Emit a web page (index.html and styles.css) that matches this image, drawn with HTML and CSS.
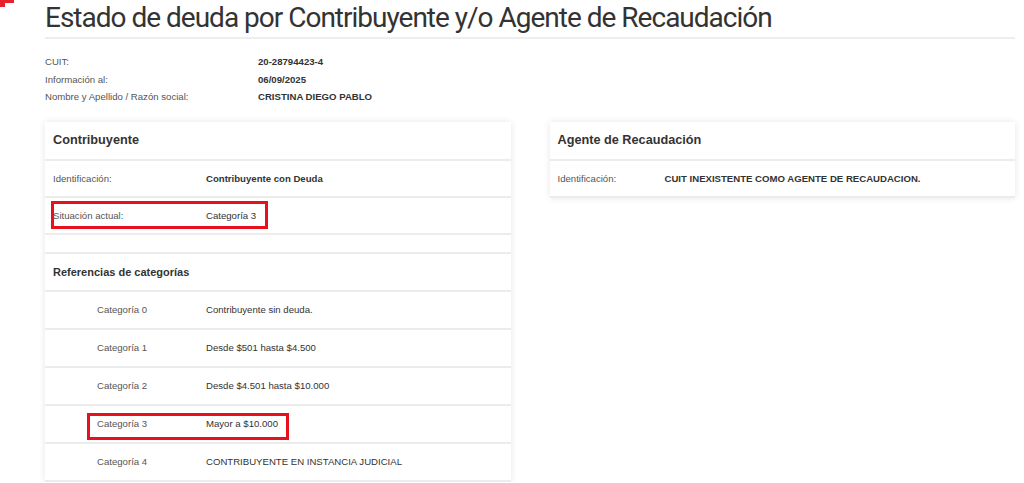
FILE: index.html
```html
<!DOCTYPE html>
<html lang="es">
<head>
    <meta charset="UTF-8">
    <title>Estado de deuda</title>
    <link rel="stylesheet" href="styles.css">
</head>
<body>
    <svg class="corner" width="16" height="8" viewBox="0 0 16 8">
        <polygon points="0,0 14,0 14,3 5,3 5,7 0,7" fill="#e8202a"/>
    </svg>

    <div class="page">
        <h1 class="title">Estado de deuda por Contribuyente y/o Agente de Recaudación</h1>

        <div class="info">
            <span class="info-label">CUIT:</span><span class="info-value">20-28794423-4</span>
            <span class="info-label">Información al:</span><span class="info-value">06/09/2025</span>
            <span class="info-label">Nombre y Apellido / Razón social:</span><span class="info-value">CRISTINA DIEGO PABLO</span>
        </div>

        <div class="cards">
            <div class="card">
                <div class="card-head">Contribuyente</div>
                <div class="row">
                    <span class="label">Identificación:</span>
                    <span class="value strong">Contribuyente con Deuda</span>
                </div>
                <div class="row marked">
                    <span class="label">Situación actual:</span>
                    <span class="value">Categoría 3</span>
                    <span class="mark mark-situacion"></span>
                </div>
                <div class="row empty"></div>
                <div class="row sub-head">Referencias de categorías</div>
                <div class="row cat">
                    <span class="label">Categoría 0</span>
                    <span class="value">Contribuyente sin deuda.</span>
                </div>
                <div class="row cat">
                    <span class="label">Categoría 1</span>
                    <span class="value">Desde $501 hasta $4.500</span>
                </div>
                <div class="row cat">
                    <span class="label">Categoría 2</span>
                    <span class="value">Desde $4.501 hasta $10.000</span>
                </div>
                <div class="row cat marked">
                    <span class="label">Categoría 3</span>
                    <span class="value">Mayor a $10.000</span>
                    <span class="mark mark-cat"></span>
                </div>
                <div class="row cat">
                    <span class="label">Categoría 4</span>
                    <span class="value">CONTRIBUYENTE EN INSTANCIA JUDICIAL</span>
                </div>
            </div>

            <div class="card card-right">
                <div class="card-head">Agente de Recaudación</div>
                <div class="row agent">
                    <span class="label">Identificación:</span>
                    <span class="value strong">CUIT INEXISTENTE COMO AGENTE DE RECAUDACION.</span>
                </div>
            </div>
        </div>
    </div>
</body>
</html>
```

FILE: styles.css
```css
body {
    margin: 0;
    background: #fff;
    font-family: "Liberation Sans", Arial, sans-serif;
    color: #444;
}

.corner {
    position: absolute;
    top: 0;
    left: 0;
}

.page {
    margin: 0 9px 0 45px;
}

.title {
    margin: 0;
    padding-top: 1px;
    font-family: Roboto, "Noto Sans", sans-serif;
    font-weight: 400;
    font-size: 28px;
    letter-spacing: -1px;
    line-height: 34px;
    color: #333;
    border-bottom: 2px solid #eee;
    padding-bottom: 2px;
}

.info {
    display: grid;
    grid-template-columns: 213px 1fr;
    margin-top: 14px;
    font-size: 9.6px;
    line-height: 17.5px;
}

.info-label {
    color: #555;
}

.info-value {
    font-weight: bold;
    color: #333;
}

.cards {
    display: grid;
    grid-template-columns: 1fr 1fr;
    gap: 39px;
    align-items: start;
    margin-top: 16px;
}

.card {
    background: #fff;
    box-shadow: 0 0 7px rgba(0, 0, 0, 0.1);
}

.card-head {
    height: 37px;
    padding-left: 8px;
    display: flex;
    align-items: center;
    font-size: 12.7px;
    font-weight: bold;
    color: #333;
    border-bottom: 2px solid #ececec;
}

.row {
    position: relative;
    display: flex;
    align-items: center;
    height: 35px;
    padding-left: 8px;
    font-size: 9.6px;
    color: #444;
    border-bottom: 2px solid #ececec;
}

.row .label {
    width: 153px;
    color: #555;
}

.row .value {
    color: #333;
}

.strong {
    font-weight: bold;
}

.empty {
    height: 17px;
}

.sub-head {
    height: 36px;
    font-size: 11px;
    font-weight: bold;
    color: #333;
}

.cat {
    height: 36px;
    padding-left: 52px;
}

.cat .label {
    width: 109px;
}

.card-right .agent .label {
    width: 107px;
}

.mark {
    position: absolute;
    border: 3px solid #e8101e;
    pointer-events: none;
}

.mark-situacion {
    left: 6px;
    top: 3px;
    width: 211px;
    height: 22px;
}

.mark-cat {
    left: 42px;
    top: 7px;
    width: 196px;
    height: 21px;
}
```
